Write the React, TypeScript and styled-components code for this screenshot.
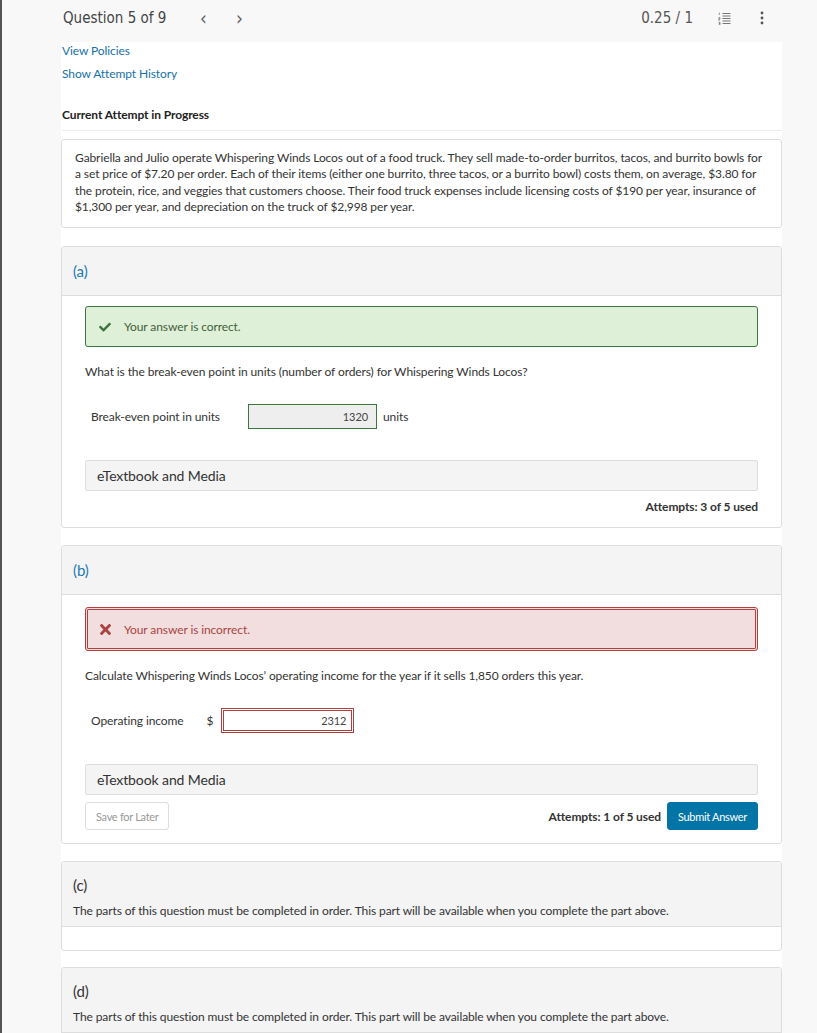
import React from "react";
import styled, { createGlobalStyle } from "styled-components";

const GlobalStyle = createGlobalStyle`
  html, body {
    margin: 0;
    padding: 0;
    background: #f8f8f8;
  }
  body {
    font-family: Lato, "Open Sans", "Liberation Sans", sans-serif;
    color: #333;
    letter-spacing: -0.1px;
  }
`;

const Page = styled.div`
  min-height: 100vh;
  border-left: 2px solid #555;
  box-sizing: border-box;
`;

const TopBar = styled.div`
  height: 42px;
  width: 721px;
  margin-left: 59px;
  display: flex;
  align-items: center;
  justify-content: space-between;
  padding-bottom: 6px;
  box-sizing: border-box;
  font-family: "Liberation Sans Narrow", "DejaVu Sans Condensed", Roboto, sans-serif;
  color: #444;
  letter-spacing: 0;
`;

const TopGroup = styled.div`
  display: flex;
  align-items: center;
`;

const QTitle = styled.span`
  font-size: 15px;
  padding-left: 2px;
  margin-right: 32px;
`;

const Chevron = styled.span<{ $space?: number }>`
  font-size: 19px;
  line-height: 18px;
  color: #666;
  width: 10px;
  text-align: center;
  margin-left: ${(p) => p.$space ?? 0}px;
`;

const Score = styled.span`
  font-size: 15px;
  color: #555;
  margin-right: 24px;
`;

const IconBox = styled.span<{ $left?: number; $right?: number }>`
  display: flex;
  width: 14px;
  justify-content: center;
  color: #666;
  margin-left: ${(p) => p.$left ?? 0}px;
  margin-right: ${(p) => p.$right ?? 0}px;
`;

const Column = styled.main`
  width: 721px;
  margin-left: 59px;
  background: #fff;
  padding-bottom: 40px;
`;

const Links = styled.div`
  display: flex;
  flex-direction: column;
  gap: 7px;
  padding-top: 1px;
`;

const Link = styled.a`
  font-size: 12px;
  color: #1672a8;
  text-decoration: none;
  line-height: 16px;
`;

const AttemptTitle = styled.div`
  font-size: 12px;
  font-weight: 700;
  color: #222;
  margin-top: 25px;
  padding-bottom: 8px;
  border-bottom: 1px solid #eee;
`;

const ProblemBox = styled.div`
  margin-top: 8px;
  border: 1px solid #ddd;
  border-radius: 3px;
  padding: 10px 13px 12px;
  font-size: 12px;
  line-height: 16.3px;
  color: #333;
`;

const Card = styled.section<{ $space?: number }>`
  margin-top: ${(p) => p.$space ?? 18}px;
  border: 1px solid #ddd;
  border-radius: 3px;
  overflow: hidden;
`;

const CardHead = styled.div<{ $active?: boolean }>`
  background: #f4f4f4;
  border-bottom: 1px solid #ddd;
  padding: ${(p) => (p.$active ? "14px 11px 14px" : "13px 11px 6px")};
`;

const PartLabel = styled.div<{ $active?: boolean }>`
  font-size: 15px;
  line-height: 20px;
  color: ${(p) => (p.$active ? "#1b7bb5" : "#333")};
`;

const LockedNote = styled.div`
  font-size: 12px;
  line-height: 18px;
  margin-top: 7px;
`;

const CardBody = styled.div<{ $empty?: boolean }>`
  padding: ${(p) => (p.$empty ? "0" : "10px 23px 13px")};
  min-height: ${(p) => (p.$empty ? "23px" : "0")};
`;

const Alert = styled.div<{ $ok: boolean }>`
  height: ${(p) => (p.$ok ? "41px" : "44px")};
  box-sizing: border-box;
  display: flex;
  align-items: center;
  gap: 13px;
  padding-left: ${(p) => (p.$ok ? "13px" : "12px")};
  border-radius: 3px;
  font-size: 12px;
  background: ${(p) => (p.$ok ? "#dff0d8" : "#f2dede")};
  color: ${(p) => (p.$ok ? "#44603a" : "#a94442")};
  border-style: ${(p) => (p.$ok ? "solid" : "double")};
  border-width: ${(p) => (p.$ok ? "1px" : "3px")};
  border-color: ${(p) => (p.$ok ? "#3c763d" : "#b0403e")};
  margin-top: ${(p) => (p.$ok ? "0" : "2px")};
`;

const Prompt = styled.p`
  font-size: 12px;
  margin: 17px 0 0;
  line-height: 16px;
`;

const AnswerRow = styled.div`
  display: flex;
  align-items: center;
  margin-top: 24px;
  padding-left: 6px;
  font-size: 12px;
`;

const FieldLabel = styled.span<{ $space: number }>`
  margin-right: ${(p) => p.$space}px;
`;

const Currency = styled.span`
  margin-right: 8px;
`;

const Field = styled.div<{ $ok: boolean }>`
  width: ${(p) => (p.$ok ? "129px" : "133px")};
  height: 25px;
  box-sizing: border-box;
  display: flex;
  align-items: center;
  justify-content: flex-end;
  padding-right: ${(p) => (p.$ok ? "8px" : "5px")};
  font-size: 11px;
  color: #444;
  background: ${(p) => (p.$ok ? "#eeeeee" : "#ffffff")};
  border-style: ${(p) => (p.$ok ? "solid" : "double")};
  border-width: ${(p) => (p.$ok ? "1px" : "3px")};
  border-color: ${(p) => (p.$ok ? "#3c763d" : "#b0403e")};
`;

const Unit = styled.span`
  margin-left: 6px;
`;

const MediaBar = styled.div`
  margin-top: 31px;
  height: 31px;
  box-sizing: border-box;
  border: 1px solid #ddd;
  border-radius: 2px;
  background: #f4f4f4;
  display: flex;
  align-items: center;
  padding-left: 11px;
  font-size: 14px;
  color: #333;
`;

const Footer = styled.div`
  margin-top: 7px;
  display: flex;
  align-items: center;
  justify-content: space-between;
  min-height: 16px;
`;

const FooterRight = styled.div`
  display: flex;
  align-items: center;
  gap: 6px;
  margin-left: auto;
`;

const Attempts = styled.span`
  font-size: 12px;
  font-weight: 700;
  color: #333;
`;

const Button = styled.button<{ $primary?: boolean }>`
  height: 28px;
  box-sizing: border-box;
  border-radius: 3px;
  font-family: Lato, "Open Sans", sans-serif;
  font-size: 11px;
  letter-spacing: -0.3px;
  padding: 0 10px;
  cursor: pointer;
  background: ${(p) => (p.$primary ? "#0274a5" : "#fff")};
  color: ${(p) => (p.$primary ? "#fff" : "#999")};
  border: 1px solid ${(p) => (p.$primary ? "#0274a5" : "#ddd")};
`;

const CheckIcon = () => (
  <svg width="12" height="10" viewBox="0 0 512 420" fill="#3c763d">
    <path d="M173.9 399.4l-166.4-166.4c-10-10-10-26.2 0-36.2l36.2-36.2c10-10 26.2-10 36.2 0L192 272.7 432.1 32.6c10-10 26.2-10 36.2 0l36.2 36.2c10 10 10 26.2 0 36.2l-294.4 294.4c-10 10-26.2 10-36.2 0z" />
  </svg>
);

const CrossIcon = () => (
  <svg width="11" height="11" viewBox="0 80 352 352" fill="#a94442">
    <path d="M242.72 256l100.07-100.07c12.28-12.28 12.28-32.19 0-44.48l-22.24-22.24c-12.28-12.28-32.19-12.28-44.48 0L176 189.28 75.93 89.21c-12.28-12.28-32.19-12.28-44.48 0L9.21 111.45c-12.28 12.28-12.28 32.19 0 44.48L109.28 256 9.21 356.07c-12.28 12.28-12.28 32.19 0 44.48l22.24 22.24c12.28 12.28 32.2 12.28 44.48 0L176 322.72l100.07 100.07c12.28 12.28 32.2 12.28 44.48 0l22.24-22.24c12.28-12.28 12.28-32.19 0-44.48L242.72 256z" />
  </svg>
);

const ListIcon = () => (
  <svg width="13" height="13" viewBox="0 0 13 13" fill="none" stroke="#666">
    <path d="M4.5 1.5h8M4.5 4h8M4.5 6.5h8M4.5 9h8M4.5 11.5h8" strokeWidth="0.9" />
    <path d="M1.3 0.6v2.4M0.6 5.6h1.4v1.2H0.6v1.2h1.4M0.6 10.2h1.4v2.6H0.6M0.8 11.5h1.2" strokeWidth="0.7" />
  </svg>
);

const KebabIcon = () => (
  <svg width="4" height="14" viewBox="0 0 4 14" fill="#555">
    <circle cx="2" cy="2" r="1.4" />
    <circle cx="2" cy="7" r="1.4" />
    <circle cx="2" cy="12" r="1.4" />
  </svg>
);

const lockedText =
  "The parts of this question must be completed in order. This part will be available when you complete the part above.";

export default function App() {
  return (
    <Page>
      <GlobalStyle />
      <TopBar>
        <TopGroup>
          <QTitle>Question 5 of 9</QTitle>
          <Chevron>&lsaquo;</Chevron>
          <Chevron $space={26}>&rsaquo;</Chevron>
        </TopGroup>
        <TopGroup>
          <Score>0.25 / 1</Score>
          <IconBox>
            <ListIcon />
          </IconBox>
          <IconBox $left={24} $right={13}>
            <KebabIcon />
          </IconBox>
        </TopGroup>
      </TopBar>

      <Column>
        <div style={{ paddingLeft: 1 }}>
          <Links>
            <Link href="#">View Policies</Link>
            <Link href="#">Show Attempt History</Link>
          </Links>
          <AttemptTitle>Current Attempt in Progress</AttemptTitle>
        </div>

        <ProblemBox>
          Gabriella and Julio operate Whispering Winds Locos out of a food truck. They sell made-to-order burritos,
          tacos, and burrito bowls for a set price of $7.20 per order. Each of their items (either one burrito, three
          tacos, or a burrito bowl) costs them, on average, $3.80 for the protein, rice, and veggies that customers
          choose. Their food truck expenses include licensing costs of $190 per year, insurance of $1,300 per year,
          and depreciation on the truck of $2,998 per year.
        </ProblemBox>

        <Card>
          <CardHead $active>
            <PartLabel $active>(a)</PartLabel>
          </CardHead>
          <CardBody>
            <Alert $ok>
              <CheckIcon />
              <span>Your answer is correct.</span>
            </Alert>
            <Prompt>What is the break-even point in units (number of orders) for Whispering Winds Locos?</Prompt>
            <AnswerRow>
              <FieldLabel $space={28}>Break-even point in units</FieldLabel>
              <Field $ok>1320</Field>
              <Unit>units</Unit>
            </AnswerRow>
            <MediaBar>eTextbook and Media</MediaBar>
            <Footer>
              <FooterRight>
                <Attempts>Attempts: 3 of 5 used</Attempts>
              </FooterRight>
            </Footer>
          </CardBody>
        </Card>

        <Card $space={17}>
          <CardHead $active>
            <PartLabel $active>(b)</PartLabel>
          </CardHead>
          <CardBody>
            <Alert $ok={false}>
              <CrossIcon />
              <span>Your answer is incorrect.</span>
            </Alert>
            <Prompt>
              Calculate Whispering Winds Locos&rsquo; operating income for the year if it sells 1,850 orders this year.
            </Prompt>
            <AnswerRow>
              <FieldLabel $space={23}>Operating income</FieldLabel>
              <Currency>$</Currency>
              <Field $ok={false}>2312</Field>
            </AnswerRow>
            <MediaBar>eTextbook and Media</MediaBar>
            <Footer>
              <Button>Save for Later</Button>
              <FooterRight>
                <Attempts>Attempts: 1 of 5 used</Attempts>
                <Button $primary>Submit Answer</Button>
              </FooterRight>
            </Footer>
          </CardBody>
        </Card>

        <Card $space={17}>
          <CardHead>
            <PartLabel>(c)</PartLabel>
            <LockedNote>{lockedText}</LockedNote>
          </CardHead>
          <CardBody $empty />
        </Card>

        <Card $space={16}>
          <CardHead>
            <PartLabel>(d)</PartLabel>
            <LockedNote>{lockedText}</LockedNote>
          </CardHead>
          <CardBody $empty />
        </Card>
      </Column>
    </Page>
  );
}
